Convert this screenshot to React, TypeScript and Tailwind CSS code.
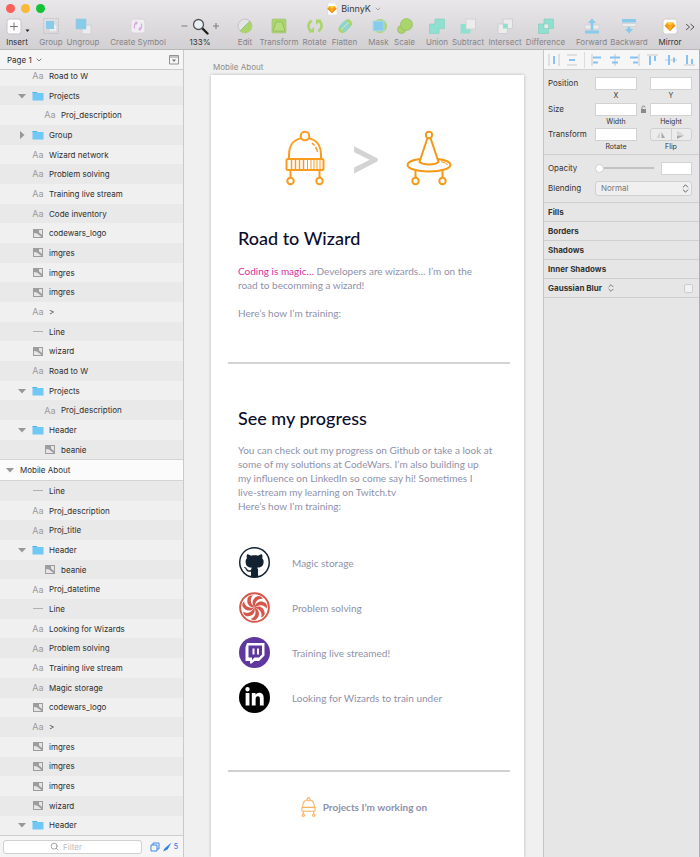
import { useState, type ReactNode } from "react";
import { FaGithub, FaLinkedinIn } from "react-icons/fa";
import { ChevronDown, ChevronsUpDown, Search } from "lucide-react";

const GREEN = "#a9d56b";
const AQUA = "#8fe0d0";
const SKY = "#86cbe9";
const PALE = "#ececec";
const EDGE = "#c3c3c8";

function Glyph({ children, w = 18 }: { children: ReactNode; w?: number }) {
  return (
    <svg width={w} height="18" viewBox={`0 0 ${w} 18`} fill="none" aria-hidden="true">
      {children}
    </svg>
  );
}

function Diamond() {
  return (
    <g>
      <path d="M6 5.5h6l2.5 3L9 14 3.500 8.500z" fill="#fca420" />
      <path d="M6 5.5h6L9 8.500z" fill="#fdd231" />
      <path d="M3.500 8.500h11L9 14z" fill="#f08a12" />
      <path d="M6.500 8.500h5L9 14z" fill="#fdb01e" />
    </g>
  );
}

type Tool = { label: string; cell: string; dark?: boolean; icon: ReactNode };

const tools: Tool[] = [
  {
    label: "Insert",
    cell: "w-[34px]",
    dark: true,
    icon: (
      <Glyph w={28}>
        <rect x="4" y="2" width="14" height="15" rx="2.500" fill="#fff" stroke="#c4c4c8" />
        <path d="M11 5.500v8M7 9.500h8" stroke="#777" strokeWidth="1" />
        <path d="M22.500 12.500h4l-2 2.500z" fill="#222" />
      </Glyph>
    ),
  },
  {
    label: "Group",
    cell: "w-[34px]",
    icon: (
      <Glyph>
        <rect x="1.500" y="1.500" width="15" height="15" stroke={EDGE} strokeDasharray="2 1" />
        <rect x="7" y="7" width="8" height="8" fill={PALE} stroke="#d4d4d8" />
        <rect x="4" y="4" width="8" height="8" fill={SKY} />
      </Glyph>
    ),
  },
  {
    label: "Ungroup",
    cell: "w-[30px]",
    icon: (
      <Glyph>
        <rect x="8" y="8" width="9" height="9" fill={PALE} stroke="#d0d0d4" />
        <rect x="2" y="2" width="10" height="10" fill={SKY} stroke="#9fc9dc" strokeWidth=".6" />
      </Glyph>
    ),
  },
  {
    label: "Create Symbol",
    cell: "w-[80px]",
    icon: (
      <Glyph>
        <rect x="2" y="2" width="14" height="14" rx="2.500" fill="#f0eef1" stroke="#d6d4d8" />
        <path d="M5.500 11.500V8q0-2 2.500-2M6.500 4.500 8 6 6.500 7.500M12.500 6.500V10q0 2-2.500 2M11.500 13.500 10 12l1.500-1.500" stroke="#d9a6e4" strokeWidth="1.200" />
      </Glyph>
    ),
  },
  {
    label: "133%",
    cell: "w-[44px]",
    dark: true,
    icon: (
      <Glyph w={40}>
        <path d="M1.500 9h6M33 9h6M36 6v6" stroke="#7d7d80" strokeWidth="1.100" />
        <path d="m22.500 11.500 5 5" stroke="#1f1f1f" strokeWidth="2.400" strokeLinecap="round" />
        <circle cx="18.500" cy="7.500" r="5" fill="#eaf1f6" stroke="#555" strokeWidth="1.300" />
      </Glyph>
    ),
  },
  {
    label: "Edit",
    cell: "ml-2 w-[30px]",
    icon: (
      <Glyph>
        <circle cx="9" cy="9" r="7" fill="#e4e4e6" stroke={EDGE} />
        <path d="M14 4 4 14A7 7 0 0 0 14 4z" fill={GREEN} />
        <path d="M14 4 4 14" stroke="#8db35c" strokeWidth=".7" />
      </Glyph>
    ),
  },
  {
    label: "Transform",
    cell: "w-[38px]",
    icon: (
      <Glyph>
        <rect x="2" y="2" width="14" height="14" rx="1" fill={GREEN} stroke="#a9c384" strokeWidth=".7" />
        <path d="M6 5h6l3 9H3z" fill="#b5dd7c" stroke="#8fb65f" strokeWidth=".7" />
      </Glyph>
    ),
  },
  {
    label: "Rotate",
    cell: "w-[33px]",
    icon: (
      <Glyph>
        <path d="M5.500 3.500Q-.5 9 5 14.500M12.500 14.500Q18.500 9 13 3.500" stroke={GREEN} strokeWidth="2.600" />
        <path d="M2.500 15.500h5.500V10zM15.500 2.500H10V8z" fill={GREEN} />
      </Glyph>
    ),
  },
  {
    label: "Flatten",
    cell: "w-[27px]",
    icon: (
      <Glyph>
        <path d="M6.500 12 12 6.500" stroke={GREEN} strokeWidth="8" strokeLinecap="round" />
        <path d="M5.500 9.500 9.500 5.500M8.500 13 12.500 9" stroke="#8fd5c9" strokeWidth="4" strokeLinecap="round" />
        <path d="m5 13 8-8" stroke="#e4f2ec" strokeWidth=".7" />
      </Glyph>
    ),
  },
  {
    label: "Mask",
    cell: "ml-[7px] w-[27px]",
    icon: (
      <Glyph>
        <circle cx="10" cy="9" r="7" fill={GREEN} />
        <rect x="3" y="4" width="11" height="10" fill={SKY} stroke="#b4dbe5" />
      </Glyph>
    ),
  },
  {
    label: "Scale",
    cell: "w-[25px]",
    icon: (
      <Glyph>
        <circle cx="5.500" cy="12.500" r="4" fill={GREEN} stroke="#8fb65f" strokeWidth=".6" />
        <circle cx="10.500" cy="7.500" r="6" fill={GREEN} stroke="#8fb65f" strokeWidth=".6" />
      </Glyph>
    ),
  },
  {
    label: "Union",
    cell: "ml-[6px] w-[28px]",
    icon: (
      <Glyph>
        <path d="M7 2h9.500v9.500H11v5H1.500V7H7z" fill={AQUA} stroke="#82cfc0" strokeWidth=".6" />
      </Glyph>
    ),
  },
  {
    label: "Subtract",
    cell: "w-[34px]",
    icon: (
      <Glyph>
        <path d="M1.500 7H7v5h4.500v4.500h-10z" fill={AQUA} />
        <rect x="7" y="2" width="9.500" height="10" fill={PALE} stroke="#cfcfd3" strokeWidth=".8" />
      </Glyph>
    ),
  },
  {
    label: "Intersect",
    cell: "w-[40px]",
    icon: (
      <Glyph>
        <rect x="7" y="2" width="9.500" height="9.500" fill={PALE} stroke="#cacace" strokeWidth=".8" />
        <rect x="2" y="7" width="9.500" height="9.500" fill={PALE} stroke="#cacace" strokeWidth=".8" />
        <rect x="7" y="7" width="4.500" height="4.500" fill={AQUA} />
      </Glyph>
    ),
  },
  {
    label: "Difference",
    cell: "w-[41px]",
    icon: (
      <Glyph>
        <path d="M7 2h9.500v9.500h-5v5h-10V7H7z" fill={AQUA} stroke="#7fcbb9" strokeWidth=".6" />
        <rect x="7" y="7" width="4.500" height="4.500" fill="#e8ecec" stroke="#7fcbb9" strokeWidth=".6" />
      </Glyph>
    ),
  },
  {
    label: "Forward",
    cell: "ml-[9px] w-[33px]",
    icon: (
      <Glyph>
        <rect x="2" y="8" width="14" height="4" fill={PALE} stroke="#cbcbd0" strokeWidth=".6" />
        <path d="M2 13.500h14v3H2zM9 1.500l4 4.500h-2.700v7H7.700V6H5z" fill={SKY} />
      </Glyph>
    ),
  },
  {
    label: "Backward",
    cell: "w-[42px]",
    icon: (
      <Glyph>
        <path d="M2 2h14v3.500H2zM7.700 9h2.600v3H13l-4 4.500L5 12h2.700z" fill={SKY} />
        <rect x="2" y="6.500" width="14" height="3" fill={PALE} stroke="#cbcbd0" strokeWidth=".6" />
      </Glyph>
    ),
  },
  {
    label: "Mirror",
    cell: "ml-[6px] w-[28px]",
    dark: true,
    icon: (
      <Glyph>
        <rect x="2" y="2" width="14" height="15" rx="2.500" fill="#fff" stroke="#cfcfd3" />
        <Diamond />
      </Glyph>
    ),
  },
];

type Kind = "text" | "folder" | "closed" | "image" | "line" | "board";
type Layer = { kind: Kind; name: string; deep?: boolean };

const layers: Layer[] = [
  { kind: "text", name: "Road to W" },
  { kind: "folder", name: "Projects" },
  { kind: "text", name: "Proj_description", deep: true },
  { kind: "closed", name: "Group" },
  { kind: "text", name: "Wizard network" },
  { kind: "text", name: "Problem solving" },
  { kind: "text", name: "Training live stream" },
  { kind: "text", name: "Code inventory" },
  { kind: "image", name: "codewars_logo" },
  { kind: "image", name: "imgres" },
  { kind: "image", name: "imgres" },
  { kind: "image", name: "imgres" },
  { kind: "text", name: ">" },
  { kind: "line", name: "Line" },
  { kind: "image", name: "wizard" },
  { kind: "text", name: "Road to W" },
  { kind: "folder", name: "Projects" },
  { kind: "text", name: "Proj_description", deep: true },
  { kind: "folder", name: "Header" },
  { kind: "image", name: "beanie", deep: true },
  { kind: "board", name: "Mobile About" },
  { kind: "line", name: "Line" },
  { kind: "text", name: "Proj_description" },
  { kind: "text", name: "Proj_title" },
  { kind: "folder", name: "Header" },
  { kind: "image", name: "beanie", deep: true },
  { kind: "text", name: "Proj_datetime" },
  { kind: "line", name: "Line" },
  { kind: "text", name: "Looking for Wizards" },
  { kind: "text", name: "Problem solving" },
  { kind: "text", name: "Training live stream" },
  { kind: "text", name: "Magic storage" },
  { kind: "image", name: "codewars_logo" },
  { kind: "text", name: ">" },
  { kind: "image", name: "imgres" },
  { kind: "image", name: "imgres" },
  { kind: "image", name: "imgres" },
  { kind: "image", name: "wizard" },
  { kind: "folder", name: "Header" },
];

function LayerIcon({ kind }: { kind: Kind }) {
  if (kind === "text") return <span className="text-[9px] text-[#9b9b9b]">Aa</span>;
  if (kind === "line") return <span className="h-px w-[10px] bg-[#b0b0b0]" />;
  if (kind === "image")
    return (
      <svg width="10" height="9" viewBox="0 0 10 9" aria-hidden="true">
        <path d="M0 0h10v9H0z" fill="#9d9d9d" />
        <path d="M1 4v4h7.500L4 4.500z" fill="#e6e6e6" />
        <path d="M6 1h3v5L6 3.500z" fill="#e6e6e6" />
      </svg>
    );
  return (
    <svg width="12" height="10" viewBox="0 0 12 10" aria-hidden="true">
      <path d="M.5 1h4l1 1h6v7.500H.5z" fill="#6fc8f5" />
      <path d="M.5 1h4l1 1h-5z" fill="#53b4e6" />
    </svg>
  );
}

function Triangle({ closed }: { closed?: boolean }) {
  return (
    <svg width="8" height="8" viewBox="0 0 8 8" fill="#979797" aria-hidden="true">
      <path d={closed ? "M2 0v8l4.500-4z" : "M0 2h8L4 6.500z"} />
    </svg>
  );
}

function LayerRow({ layer, odd }: { layer: Layer; odd: boolean }) {
  if (layer.kind === "board")
    return (
      <li className="flex min-h-0 flex-1 items-center gap-[6px] border-y border-[#d4d4d4] bg-[#fbfbfb] pl-[6px]">
        <Triangle />
        {layer.name}
      </li>
    );
  return (
    <li className={`flex min-h-0 flex-1 items-center ${layer.deep ? "pl-[30px]" : "pl-[18px]"} ${odd ? "bg-[#e9e9e9]" : "bg-[#f0f0f0]"}`}>
      <span className="flex w-[14px] items-center">
        {layer.kind === "folder" && <Triangle />}
        {layer.kind === "closed" && <Triangle closed />}
      </span>
      <span className="flex w-[12px] items-center justify-center">
        <LayerIcon kind={layer.kind} />
      </span>
      <span className="pl-[5px]">{layer.name}</span>
    </li>
  );
}

function Beanie({ small }: { small?: boolean }) {
  return (
    <svg
      width={small ? 15 : 40}
      height={small ? 20 : 56}
      viewBox="0 0 40 56"
      fill="none"
      stroke={small ? "#fbb162" : "#f99b1c"}
      strokeWidth={small ? 3 : 2}
      role="img"
      aria-label="beanie"
    >
      <path d="M4 29v-4C4 14 10 8 20 8s16 6 16 17v4" />
      <circle cx="20" cy="6" r="4.300" fill="#fff" />
      <rect x="1.500" y="29" width="37" height="11" rx="1.500" />
      {!small && <path d="M6.500 29v11M10.500 29v11M14.500 29v11M18.500 29v11" strokeWidth="1.500" />}
      {!small && <path d="M22.500 29v11M26 29v11M29 29v11M32 29v11M35 29v11" strokeWidth="1" />}
      <path d="M5.500 40v8M34.500 40v8" />
      <circle cx="5.500" cy="51" r="3.200" />
      <circle cx="34.500" cy="51" r="3.200" />
      {!small && <path d="m27 13 2.500 2.500M30.500 17q1.500 2 2 5" strokeWidth="1.500" />}
    </svg>
  );
}

function WizardHat() {
  return (
    <svg width="46" height="56" viewBox="0 0 46 56" fill="none" stroke="#f59817" strokeWidth="2" role="img" aria-label="wizard hat">
      <path d="M14 29C6 30 1.500 32.500 1.500 35c0 3.500 9 6.500 21.500 6.500S44.500 38.500 44.500 35c0-2.500-4.500-5-12.500-6" />
      <path d="M21.500 8 13.500 32c4 3.300 15 3.300 19 0L24.500 8" />
      <circle cx="23" cy="5" r="3.200" fill="#fff" />
      <path d="M9.500 40v8M36.500 40v8" />
      <circle cx="9.500" cy="51" r="3.200" />
      <circle cx="36.500" cy="51" r="3.200" />
      <path d="m35 31.500 4.500 1.500 2 2" strokeWidth="1" />
    </svg>
  );
}

function Codewars() {
  return (
    <svg width="31" height="31" viewBox="-16 -16 32 32" aria-hidden="true">
      <circle r="14.800" fill="#fff" stroke="#d4574b" strokeWidth="2" />
      {[0, 51, 103, 154, 206, 257, 309].map((a) => (
        <path key={a} transform={`rotate(${a})`} d="M0 0C-3.500-4-2.500-10 4-11.800 6-12 8-10.500 8.500-9 3.500-9.500.5-6 0 0z" fill="#d4574b" />
      ))}
    </svg>
  );
}

function Twitch() {
  return (
    <svg width="31" height="31" viewBox="0 0 31 31" aria-hidden="true">
      <circle cx="15.500" cy="15.500" r="15.500" fill="#5f389f" />
      <path d="M8 6h17.500v12.500L20 24h-4.500L12.500 26.500H11V24H6.500V10z" fill="#fff" />
      <path d="M9.500 8.500H23v9l-3 3h-4.500L13 23v-2.500H9.500z" fill="#5f389f" />
      <path d="M13.500 11.500h2v6h-2zM18 11.500h2v6h-2z" fill="#fff" />
    </svg>
  );
}

const links = [
  {
    text: "Magic storage",
    icon: (
      <span className="flex size-[31px] items-center justify-center rounded-full bg-[#122230]">
        <FaGithub size={29} color="#fff" />
      </span>
    ),
  },
  { text: "Problem solving", icon: <Codewars /> },
  { text: "Training live streamed!", icon: <Twitch /> },
  {
    text: "Looking for Wizards to train under",
    icon: (
      <span className="flex size-[31px] items-center justify-center rounded-full bg-black">
        <FaLinkedinIn size={21} color="#fff" />
      </span>
    ),
  },
];

const aligns = [
  ["M2 2v12M12 2v12", "M7 4v8"],
  ["M2 3h10M2 13h10", "M4 8h6"],
  ["M2 2v12", "M3 5.500h8M3 10.500h5"],
  ["M7 2v12", "M2 5.500h10M4 10.500h6"],
  ["M12 2v12", "M3 5.500h8M6 10.500h5"],
  ["M2 3h11", "M5 4v9M10 4v5"],
  ["M1 8h12", "M5 3v10M10 5.500v5"],
  ["M2 13h11", "M5 3v9M10 7v5"],
];

function Field({ label }: { label: string }) {
  return (
    <label className="flex flex-1 flex-col items-center">
      <input className="h-[13px] w-full min-w-0 border border-[#d2d2d2] bg-white px-1 outline-none" />
      <span className="h-[12px] text-[7px] leading-[12px]">{label}</span>
    </label>
  );
}

function Inspector() {
  const [opacity, setOpacity] = useState(0);
  return (
    <aside className="flex w-[157px] shrink-0 flex-col border-x border-l-[#c6c6c6] border-r-[#a9adb5] bg-[#e6e6e6] text-[8px] text-[#333]">
      <div className="flex h-[20px] items-center justify-between border-b border-[#d0d0d0] bg-[#f6f6f6] px-[3px]">
        {aligns.map(([guide, bars], i) => (
          <button key={i} type="button" aria-label={`Align ${i + 1}`} className={i === 1 ? "border-r border-[#dcdcdc] pr-[5px]" : ""}>
            <svg width="14" height="16" viewBox="0 0 14 16" fill="none">
              <path d={guide} stroke="#c9c9c9" />
              <path d={bars} stroke="#86c3f3" strokeWidth="2" />
            </svg>
          </button>
        ))}
      </div>
      <div className="flex flex-col border-b border-[#cfcfcf] pt-[7px] pr-[7px] pl-[4px]">
        <div className="flex h-[26px]">
          <span className="w-[47px] leading-[13px]">Position</span>
          <div className="flex flex-1 gap-[13px]">
            <Field label="X" />
            <Field label="Y" />
          </div>
        </div>
        <div className="flex h-[25px]">
          <span className="w-[47px] leading-[13px]">Size</span>
          <div className="flex flex-1">
            <Field label="Width" />
            <svg width="13" height="13" viewBox="0 0 13 13" fill="none" stroke="#8a8a8a" aria-hidden="true">
              <rect x="4.500" y="6.500" width="4" height="3" fill="#8a8a8a" />
              <path d="M5 6V4.500a1.500 1.500 0 0 1 3 0" />
            </svg>
            <Field label="Height" />
          </div>
        </div>
        <div className="flex h-[26px]">
          <span className="w-[47px] leading-[13px]">Transform</span>
          <div className="flex flex-1 gap-[13px]">
            <Field label="Rotate" />
            <div className="flex flex-1 flex-col items-center">
              <div className="flex h-[13px] w-full rounded-[3px] border border-[#d0d0d0] bg-[#ececec]">
                <button type="button" aria-label="Flip horizontally" className="flex flex-1 items-center justify-center border-r border-[#d0d0d0]">
                  <svg width="10" height="8" viewBox="0 0 10 8">
                    <path d="M4 1v6H.5z" fill="#d2d2d2" />
                    <path d="M5.500 1v6H9z" fill="#a8a8a8" />
                  </svg>
                </button>
                <button type="button" aria-label="Flip vertically" className="flex flex-1 items-center justify-center">
                  <svg width="10" height="8" viewBox="0 0 10 8">
                    <path d="M1 0v3.500h7z" fill="#d2d2d2" />
                    <path d="M1 8V4.500h7z" fill="#a8a8a8" />
                  </svg>
                </button>
              </div>
              <span className="text-[7px] leading-[12px]">Flip</span>
            </div>
          </div>
        </div>
      </div>
      <div className="flex flex-col gap-[6px] border-b border-[#cfcfcf] pt-[6px] pr-[7px] pb-[7px] pl-[4px]">
        <div className="flex h-[14px] items-center">
          <label htmlFor="opacity" className="w-[47px]">
            Opacity
          </label>
          <input
            id="opacity"
            type="range"
            min="0"
            max="100"
            value={opacity}
            onChange={(e) => setOpacity(Number(e.target.value))}
            className="h-[10px] w-[59px] appearance-none bg-[linear-gradient(#c2c2c2,#c2c2c2)] bg-[length:100%_2px] bg-center bg-no-repeat [&::-webkit-slider-thumb]:size-[9px] [&::-webkit-slider-thumb]:appearance-none [&::-webkit-slider-thumb]:rounded-full [&::-webkit-slider-thumb]:border [&::-webkit-slider-thumb]:border-[#d0d0d0] [&::-webkit-slider-thumb]:bg-white"
          />
          <input aria-label="Opacity value" className="ml-auto h-[13px] w-[31px] border border-[#d2d2d2] bg-white" />
        </div>
        <div className="flex h-[14px] items-center">
          <label htmlFor="blending" className="w-[47px]">
            Blending
          </label>
          <div className="relative flex-1">
            <select id="blending" className="block h-[15px] w-full appearance-none rounded-[3px] border border-[#d0d0d0] bg-[#f0f0f0] pl-[5px] text-[#777]">
              <option>Normal</option>
            </select>
            <ChevronsUpDown size={11} color="#555" className="pointer-events-none absolute top-[2px] right-[1px]" />
          </div>
        </div>
      </div>
      {["Fills", "Borders", "Shadows", "Inner Shadows"].map((s) => (
        <h2 key={s} className="flex h-[19px] items-center border-b border-[#cfcfcf] pl-[4px] font-bold">
          {s}
        </h2>
      ))}
      <div className="flex h-[19px] items-center border-b border-[#cfcfcf] pr-[6px] pl-[4px] font-bold">
        <label htmlFor="blur">Gaussian Blur</label>
        <ChevronsUpDown size={10} color="#666" className="ml-[4px]" />
        <input id="blur" type="checkbox" className="ml-auto size-[9px] appearance-none rounded-[2px] border border-[#cdcdcd] bg-[#f2f2f2]" />
      </div>
    </aside>
  );
}

export default function App() {
  return (
    <div className="flex h-screen flex-col overflow-hidden bg-[#f0f0f0] font-['Inter','Liberation_Sans',sans-serif]">
      <header className="flex h-[50px] shrink-0 flex-col border-b border-[#b9b7ba] bg-linear-to-b from-[#e9e7ea] to-[#d2d0d3]">
        <div className="grid h-[17px] shrink-0 grid-cols-[1fr_auto_1fr] items-center">
          <div className="flex gap-[6px] pl-[6px]">
            <span className="size-[9px] rounded-full bg-[#f95f57]" />
            <span className="size-[9px] rounded-full bg-[#fbb834]" />
            <span className="size-[9px] rounded-full bg-[#13c237]" />
          </div>
          <h1 className="flex items-center gap-[3px] pl-[8px] text-[9px] text-[#3a3a3a]">
            <svg width="12" height="12" viewBox="2 2 14 14" aria-hidden="true">
              <path d="M4 2h8l3 3v11H4z" fill="#fff" stroke="#ccc" strokeWidth=".5" />
              <Diamond />
            </svg>
            BinnyK
            <ChevronDown size={8} color="#888" />
          </h1>
        </div>
        <nav className="flex min-w-0 flex-1">
          {tools.map((t) => (
            <button
              key={t.label}
              type="button"
              className={`flex shrink-0 flex-col items-center text-[8px] leading-[14px] whitespace-nowrap ${t.cell} ${t.dark ? "text-[#333]" : "text-[#868488]"}`}
            >
              {t.icon}
              <span>{t.label}</span>
            </button>
          ))}
          <button type="button" aria-label="More" className="ml-[1px] flex h-[20px] items-center">
            <svg width="10" height="8" viewBox="0 0 10 8" fill="none" stroke="#555" aria-hidden="true">
              <path d="m1 1 3.500 3L1 7M5.500 1 9 4 5.500 7" />
            </svg>
          </button>
        </nav>
      </header>

      <div className="flex min-h-0 flex-1">
        <aside className="flex w-[184px] shrink-0 flex-col border-r border-[#c9c9c9] text-[8px] text-[#2e2e2e]">
          <div className="z-10 flex h-[20px] shrink-0 items-center border-b border-[#cbcbcb] bg-[#f5f5f5] pr-[4px] pl-[7px]">
            <button type="button" className="flex items-center gap-[3px]">
              Page 1 <ChevronDown size={8} color="#444" />
            </button>
            <button type="button" aria-label="Pages" className="ml-auto">
              <svg width="10" height="10" viewBox="0 0 10 10" fill="none">
                <path d="M.5.5h9v8.500h-9zM.5 2h9" stroke="#929292" />
                <path d="M3 4.500h4L5 7z" fill="#777" />
              </svg>
            </button>
          </div>
          <ul className="-mt-1 flex min-h-0 flex-1 flex-col">
            {layers.map((l, i) => (
              <LayerRow key={i} layer={l} odd={i % 2 === 1} />
            ))}
          </ul>
          <div className="z-10 flex h-[22px] shrink-0 items-center border-t border-[#cfcfcf] bg-[#f5f5f5] pr-[5px] pl-[3px]">
            <label className="flex h-[14px] w-[139px] items-center justify-center gap-[4px] rounded-[3px] border border-[#d0d0d0] bg-white">
              <Search size={9} color="#8a8a8a" />
              <input placeholder="Filter" aria-label="Filter" className="w-[32px] outline-none placeholder:text-[#bcbcbc]" />
            </label>
            <button type="button" aria-label="Slices" className="ml-auto flex items-center gap-[2px] text-[7px] leading-[10px] font-medium text-[#2f82e8]">
              <svg width="10" height="10" viewBox="0 0 10 10" fill="none" stroke="#3f8bea" aria-hidden="true">
                <path d="M1 3h6v6H1zM3 3V1h6v6H7" />
              </svg>
              <svg width="10" height="10" viewBox="0 0 10 10" fill="#2f82e8" aria-hidden="true">
                <path d="M9.500.5 5.500 7.500 1 9.500l1.500-3z" />
              </svg>
              5
            </button>
          </div>
        </aside>

        <main className="flex min-w-0 flex-1 flex-col overflow-hidden pr-[19px] pl-[27px]">
          <div className="h-[25px] shrink-0 pl-[2px] text-[8px] leading-[35px] text-[#8c8c8c]">Mobile About</div>
          <article className="flex shrink-0 grow flex-col bg-white pr-[14px] pl-[17px] font-['Lato','Liberation_Sans',sans-serif] text-[10px] leading-[14px] text-[#8f91a9] shadow-[0_0_3px_rgba(0,0,0,0.25)]">
            <div className="flex h-[146px] items-center justify-center gap-[28px] pt-[20px] pr-[2px]">
              <Beanie />
              <span className="flex w-[25px] justify-center pb-[2px] text-[60px] leading-[56px] font-semibold text-[#d3d3d3]">&gt;</span>
              <WizardHat />
            </div>
            <section className="flex flex-col px-[10px]">
              <h2 className="pt-[5px] text-[18px] leading-[24px] font-medium text-[#0c0c2c]">Road to Wizard</h2>
              <p className="pt-[14px]">
                <span className="text-[#d62f9f]">Coding is magic…</span> Developers are wizards… I’m on the
                <br />
                road to becomming a wizard!
                <br />
                <br />
                Here’s how I’m training:
              </p>
            </section>
            <hr className="mt-[42px] h-[2px] border-0 bg-[#d3d3d3]" />
            <section className="flex flex-col px-[10px]">
              <h2 className="pt-[42px] text-[18px] leading-[24px] font-medium text-[#0c0c2c]">See my progress</h2>
              <p className="pt-[13px] whitespace-nowrap">
                You can check out my progress on Github or take a look at
                <br />
                some of my solutions at CodeWars. I’m also building up
                <br />
                my influence on LinkedIn so come say hi! Sometimes I
                <br />
                live-stream my learning on Twitch.tv
                <br />
                Here’s how I’m training:
              </p>
              <ul className="flex flex-col gap-[14px] pt-[34px] pl-px">
                {links.map((l) => (
                  <li key={l.text} className="flex items-center gap-[22px]">
                    {l.icon}
                    {l.text}
                  </li>
                ))}
              </ul>
            </section>
            <hr className="mt-[57px] h-[2px] border-0 bg-[#d0d0d0]" />
            <div className="flex items-center justify-center gap-[7px] pt-[25px] pr-[10px] font-bold">
              <Beanie small />
              Projects I’m working on
            </div>
          </article>
        </main>

        <Inspector />
      </div>
    </div>
  );
}
